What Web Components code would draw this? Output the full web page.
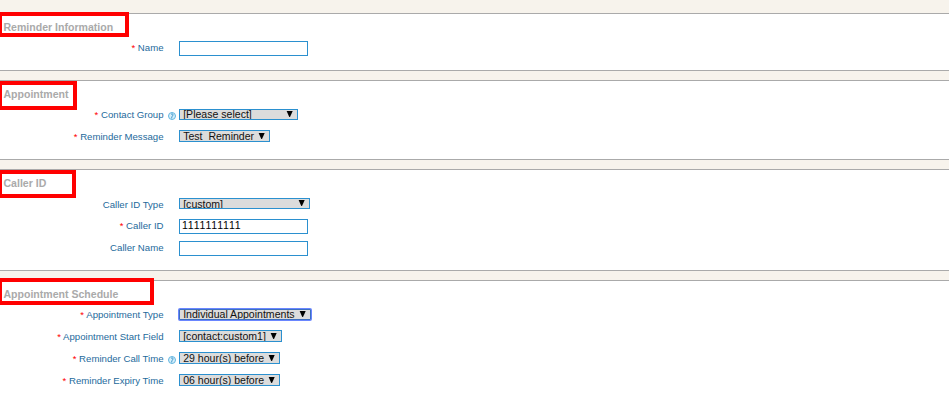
<!DOCTYPE html>
<html lang="en"><head><meta charset="utf-8"><title>Reminder</title>
<style>html,body{margin:0;height:100%;overflow:hidden;background:#f7f3ec;font-family:"Liberation Sans",Arial,sans-serif}</style>
</head><body>
<reminder-form></reminder-form>
<script>
class Base extends HTMLElement{
  connectedCallback(){ if(!this.shadowRoot){this.attachShadow({mode:'open'}).innerHTML=this.render();} }
  a(n,d=''){return this.getAttribute(n)??d;}
}
customElements.define('form-section',class extends Base{
  render(){return `<style>
:host{display:block;box-sizing:border-box;position:relative;height:${this.a('h')}px;background:#fff;border-top:1px solid #aaa;border-bottom:1px solid #aaa;margin-bottom:9px}
:host(:last-child){margin-bottom:0}
.head{height:${this.a('head')}px;box-sizing:border-box;padding:7px 0 0 3.5px;font:bold 10.56px/12px "Liberation Sans",Arial,sans-serif;color:#aaa;white-space:nowrap}
.mark{position:absolute;left:-2px;top:${this.a('mt')}px;width:${this.a('mw')}px;height:${this.a('mh')}px;box-sizing:border-box;border:4px solid #f00}
</style><div class="head">${this.a('title-text')}</div><slot></slot><div class="mark"></div>`;}
});
customElements.define('help-icon',class extends Base{
  render(){return `<style>:host{display:block;width:8px;height:8px}svg{display:block}</style>
<svg width="8" height="8" viewBox="0 0 8 8"><circle cx="4" cy="4" r="3.5" fill="#d6effb" stroke="#62b5df"/><path d="M3 2.4C4 1.7 5.3 1.9 5.1 3C4.9 3.9 4.1 3.9 3.9 4.8L3.6 6.4" fill="none" stroke="#318fc5" stroke-width=".9"/></svg>`;}
});
customElements.define('form-row',class extends Base{
  render(){return `<style>
:host{display:grid;grid-template-columns:163.5px 15.5px auto;justify-content:start;height:${this.a('h','22')}px;align-items:start}
.l{margin-top:5px;text-align:right;font-size:9.62px;line-height:11px;color:#1d6a9c;white-space:nowrap}
b{font-weight:normal;color:#f00}
help-icon{margin:8px 0 0 4.5px}
</style><div class="l">${this.hasAttribute('required')?'<b>*</b> ':''}${this.a('label')}</div><div>${this.hasAttribute('help')?'<help-icon></help-icon>':''}</div><slot></slot>`;}
});
customElements.define('text-field',class extends Base{
  render(){return `<style>
:host{display:block;box-sizing:border-box;width:129px;height:15px;margin-top:4px;border:1px solid #2b90cf;background:#fff;overflow:hidden}
span{display:block;padding-left:2px;margin-top:-1px;font-size:10.56px;font-kerning:none;line-height:13px;color:#000}
</style><span><slot></slot></span>`;}
});
customElements.define('select-field',class extends Base{
  render(){const t=+this.a('t','4'),f=this.hasAttribute('focus');return `<style>
:host{display:flex;justify-content:space-between;box-sizing:border-box;width:${this.a('w')}px;height:${this.a('h','12')}px;margin-top:${t}px;border:1px solid #2b90cf;background:#dcdcdc;overflow:hidden;padding:0 4px 0 3.2px;color:#111;${f?'border-color:#3c6fc0;box-shadow:0 0 0 1px #6a86ff;border-radius:1px;':''}}
span{display:block;margin-top:${3-t}px;font-size:10.56px;line-height:12px;height:12px;white-space:pre}
svg{display:block;flex:none;margin-top:${6-t-(this.hasAttribute('up')?1:0)}px}
</style><span><slot></slot></span><svg width="7" height="6" viewBox="0 0 7 6"><path d="M.6 0H6.7L4 6H3.3Z" fill="#000"/></svg>`;}
});
customElements.define('reminder-form',class extends Base{
  render(){return `<style>:host{display:block;padding-top:13px}</style>
<form-section title-text="Reminder Information" h="58" head="23" mt="-2" mw="131" mh="25">
<form-row label="Name" required><text-field></text-field></form-row></form-section>
<form-section title-text="Appointment" h="80" head="23" mt="0" mw="79" mh="29">
<form-row label="Contact Group" required help><select-field w="119" h="11" t="5">[Please select]</select-field></form-row>
<form-row label="Reminder Message" required><select-field w="91">Test  Reminder</select-field></form-row></form-section>
<form-section title-text="Caller ID" h="102" head="24" mt="0" mw="78" mh="28">
<form-row label="Caller ID Type" h="21"><select-field w="131" h="11" up>[custom]</select-field></form-row>
<form-row label="Caller ID" required><text-field>1111111111</text-field></form-row>
<form-row label="Caller Name"><text-field></text-field></form-row></form-section>
<form-section title-text="Appointment Schedule" h="150" head="23" mt="-3" mw="156" mh="27">
<form-row label="Appointment Type" required><select-field w="132" h="11" t="5" focus>Individual Appointments</select-field></form-row>
<form-row label="Appointment Start Field" required><select-field w="103">[contact:custom1]</select-field></form-row>
<form-row label="Reminder Call Time" required help><select-field w="101">29 hour(s) before</select-field></form-row>
<form-row label="Reminder Expiry Time" required><select-field w="101">06 hour(s) before</select-field></form-row></form-section>`;}
});
</script></body></html>
